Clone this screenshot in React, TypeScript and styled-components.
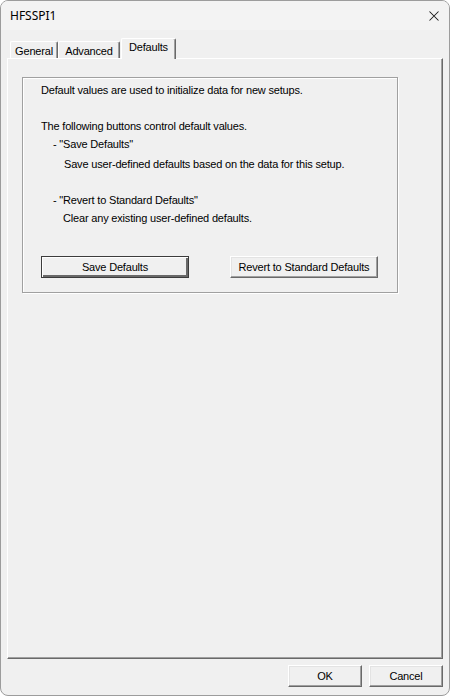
import React from "react"
import styled, { createGlobalStyle } from "styled-components"

const GlobalStyle = createGlobalStyle`
  html, body { margin: 0; padding: 0; background: #ffffff; }
  * { box-sizing: border-box; }
`

const S = {
  Window: styled.div`
    width: 450px;
    height: 696px;
    display: flex;
    flex-direction: column;
    background: #f0f0f0;
    border: 1px solid #9c9c9c;
    border-radius: 8px;
    overflow: hidden;
    font-family: "Liberation Sans", Arial, sans-serif;
    font-size: 11px;
    letter-spacing: -0.18px;
    color: #000;
  `,
  TitleBar: styled.div`
    height: 29px;
    flex: none;
    display: flex;
    align-items: center;
    justify-content: space-between;
    padding: 0 10px 0 9px;
    background: #f3f3f3;
    font-family: "Noto Sans", "Open Sans", sans-serif;
    font-size: 12px;
    letter-spacing: 0;
  `,
  Close: styled.div`
    width: 10px;
    height: 10px;
    display: flex;
    margin-top: 1px;
  `,
  Body: styled.div`
    flex: 1;
    display: flex;
    flex-direction: column;
    padding: 8px 6px 0 6px;
  `,
  TabRow: styled.div`
    height: 20px;
    flex: none;
    display: flex;
    align-items: flex-end;
    padding-left: 3px;
  `,
  Tab: styled.div<{ $active?: boolean; $w: number }>`
    position: relative;
    width: ${({ $w }) => $w}px;
    height: ${({ $active }) => ($active ? "21px" : "17px")};
    margin: ${({ $active }) => ($active ? "0 -1px -1px 1px" : "0")};
    padding-top: 2px;
    display: flex;
    justify-content: center;
    align-items: ${({ $active }) => ($active ? "flex-start" : "center")};
    background: #f0f0f0;
    border-top: 1px solid #ffffff;
    border-left: 1px solid #ffffff;
    border-right: 1px solid #696969;
    border-radius: 2px 2px 0 0;
    box-shadow: inset -1px 0 #a0a0a0;
    z-index: ${({ $active }) => ($active ? 1 : 0)};
  `,
  Panel: styled.div`
    flex: 1;
    border-top: 1px solid #ffffff;
    border-left: 1px solid #ffffff;
    border-right: 1px solid #696969;
    border-bottom: 1px solid #696969;
    box-shadow: inset -1px -1px #a0a0a0;
    padding: 18px 0 0 14px;
  `,
  Group: styled.div`
    width: 376px;
    height: 216px;
    border: 1px solid #a0a0a0;
    box-shadow: inset 1px 1px #ffffff, 1px 1px #ffffff;
    padding: 6px 19px 0 18px;
    display: flex;
    flex-direction: column;
  `,
  Line: styled.div<{ $gap: number; $indent?: number }>`
    height: 13px;
    line-height: 13px;
    white-space: nowrap;
    margin-top: ${({ $gap }) => $gap}px;
    padding-left: ${({ $indent }) => $indent || 0}px;
  `,
  ButtonRow: styled.div`
    margin-top: 31px;
    display: flex;
    justify-content: space-between;
  `,
  Button: styled.button<{ $default?: boolean; $w: number }>`
    width: ${({ $w }) => $w}px;
    height: 22px;
    padding: 0;
    margin: 0;
    font-family: "Liberation Sans", Arial, sans-serif;
    font-size: 11px;
    letter-spacing: -0.18px;
    color: #000;
    background: #f0f0f0;
    border: 1px solid;
    border-color: ${({ $default }) =>
      $default ? "#3c3c3c" : "#ffffff #696969 #696969 #ffffff"};
    box-shadow: ${({ $default }) =>
      $default
        ? "inset 1px 1px #ffffff, inset -2px -2px #696969"
        : "inset -1px -1px #a0a0a0, inset 1px 1px #e3e3e3"};
  `,
  Footer: styled.div`
    height: 36px;
    flex: none;
    display: flex;
    justify-content: flex-end;
    gap: 7px;
    padding-top: 6px;
  `,
}

export default function App() {
  return (
    <>
      <GlobalStyle />
      <S.Window>
        <S.TitleBar>
          <span>HFSSPI1</span>
          <S.Close>
            <svg width="10" height="10" viewBox="0 0 10 10">
              <path d="M0.5 0.5 L9.5 9.5 M9.5 0.5 L0.5 9.5" stroke="#1a1a1a" strokeWidth="1.05" fill="none" />
            </svg>
          </S.Close>
        </S.TitleBar>
        <S.Body>
          <S.TabRow>
            <S.Tab $w={48}>General</S.Tab>
            <S.Tab $w={62}>Advanced</S.Tab>
            <S.Tab $active $w={55}>Defaults</S.Tab>
          </S.TabRow>
          <S.Panel>
            <S.Group>
              <S.Line $gap={0}>Default values are used to initialize data for new setups.</S.Line>
              <S.Line $gap={23}>The following buttons control default values.</S.Line>
              <S.Line $gap={5} $indent={12}>- "Save Defaults"</S.Line>
              <S.Line $gap={7} $indent={23}>Save user-defined defaults based on the data for this setup.</S.Line>
              <S.Line $gap={23} $indent={12}>- "Revert to Standard Defaults"</S.Line>
              <S.Line $gap={5} $indent={22}>Clear any existing user-defined defaults.</S.Line>
              <S.ButtonRow>
                <S.Button $default $w={148}>Save Defaults</S.Button>
                <S.Button $w={148}>Revert to Standard Defaults</S.Button>
              </S.ButtonRow>
            </S.Group>
          </S.Panel>
          <S.Footer>
            <S.Button $w={74}>OK</S.Button>
            <S.Button $w={74}>Cancel</S.Button>
          </S.Footer>
        </S.Body>
      </S.Window>
    </>
  )
}
